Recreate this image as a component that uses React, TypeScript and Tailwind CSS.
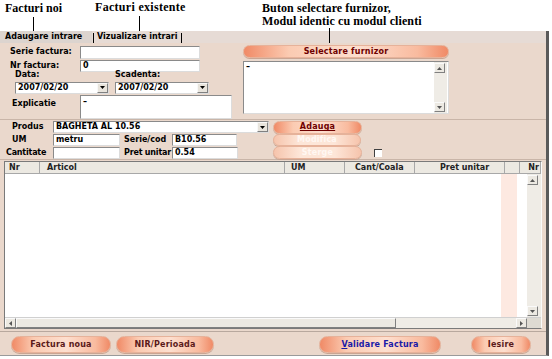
import React from "react";

const ui = "font-['DejaVu_Sans',sans-serif] text-[8px] font-bold";

const Pill = ({
  label,
  w,
  tone = "text-[#6e0000]",
  disabled = false,
  className = "",
}: {
  label: React.ReactNode;
  w: string;
  tone?: string;
  disabled?: boolean;
  className?: string;
}) => (
  <div
    className={`${w} ${className} h-[13px] rounded-full border border-[#e6b29a] flex items-center justify-center shadow-[0_1px_0_#c9a593] ${
      disabled
        ? "bg-[linear-gradient(90deg,#f6c4ac,#fde6d8_30%,#fde6d8_70%,#f6c4ac)]"
        : "bg-[linear-gradient(90deg,#f08a66,#fbcbb2_22%,#fddfcf_55%,#f9bb9f_85%,#f08a66)]"
    }`}
  >
    <span className={`${ui} ${disabled ? "text-[#fff7f2]" : tone} tracking-[0.2px] leading-none`}>{label}</span>
  </div>
);

const Input = ({ w, h = "h-[12px]", value = "" }: { w: string; h?: string; value?: string }) => (
  <div className={`${w} ${h} bg-white border border-[#8a8a8a] border-r-[#dcdcdc] border-b-[#dcdcdc] flex items-center px-[2px] ${ui} text-black`}>
    {value}
  </div>
);

const Combo = ({ w, value }: { w: string; value: string }) => (
  <div className={`${w} h-[12px] bg-white border border-[#8a8a8a] border-r-[#dcdcdc] border-b-[#dcdcdc] flex items-center`}>
    <span className={`${ui} flex-1 pl-[2px] text-black`}>{value}</span>
    <div className="w-[11px] h-[10px] bg-[#e8e4dc] border border-[#f8f8f8] border-r-[#808080] border-b-[#808080] flex items-center justify-center">
      <svg width="5" height="3" viewBox="0 0 5 3"><path d="M0 0h5L2.5 3z" fill="#000" /></svg>
    </div>
  </div>
);

const ScrollBtn = ({ dir }: { dir: "up" | "down" | "left" | "right" }) => {
  const d = {
    up: "M0 3h5L2.5 0z",
    down: "M0 0h5L2.5 3z",
    left: "M3 0v5L0 2.5z",
    right: "M0 0v5L3 2.5z",
  }[dir];
  const vert = dir === "up" || dir === "down";
  return (
    <div className="w-[11px] h-[10px] bg-[#ece9e2] border border-[#fafafa] border-r-[#808080] border-b-[#808080] flex items-center justify-center">
      <svg width={vert ? 5 : 3} height={vert ? 3 : 5} viewBox={vert ? "0 0 5 3" : "0 0 3 5"}>
        <path d={d} fill="#555" />
      </svg>
    </div>
  );
};

export default function App() {
  return (
    <div className="w-[552px] h-[359px] bg-white overflow-hidden flex flex-col">
      {/* annotations */}
      <div className="relative h-[31px] shrink-0 font-['Liberation_Serif',serif] font-bold text-[12px] leading-[13px] text-black">
        <div className="absolute left-[5px] top-[2px]">Facturi noi</div>
        <div className="absolute left-[95px] top-[1px] tracking-[0.3px]">Facturi existente</div>
        <div className="absolute left-[262px] top-[2px] tracking-[0.1px]">
          Buton selectare furnizor,
          <br />
          Modul identic cu modul clienti
        </div>
        <div className="absolute left-[33px] top-[17px] w-px h-[14px] bg-black" />
        <div className="absolute left-[139px] top-[16px] w-px h-[15px] bg-black" />
      </div>

      <div className="relative flex-1 flex flex-col bg-[#ead8cc] border-r-[3px] border-r-[#5a5a5a] mr-[3px] border-b border-b-[#9a9a9a] mb-[3px]">
        <div className="absolute left-[329px] top-[-3px] w-px h-[15px] bg-black" />
        {/* tabs */}
        <div className={`h-[12px] flex items-end bg-[#e6dbd5] ${ui}`}>
          <div className="w-[92px] h-[12px] pl-[5px] bg-[#dcd4cf] flex items-center text-black">Adaugare intrare</div>
          <div className="w-px h-[10px] bg-black ml-[1px]" />
          <div className="pl-[3px] pr-[3px] h-[12px] flex items-center text-black">Vizualizare intrari</div>
          <div className="w-px h-[10px] bg-black" />
        </div>

        {/* header form */}
        <div className="flex pt-[2px] h-[77px] border-b border-b-[#c9b5a8]">
          <div className={`w-[243px] flex flex-col ${ui} text-black`}>
            <div className="flex items-center h-[14px]">
              <span className="w-[80px] pl-[10px]">Serie factura:</span>
              <Input w="w-[120px]" h="h-[13px]" />
            </div>
            <div className="flex items-center h-[13px]">
              <span className="w-[80px] pl-[10px]">Nr factura:</span>
              <Input w="w-[120px]" value="0" />
            </div>
            <div className="flex h-[9px] items-end pl-[15px]">
              <span className="w-[100px] -mt-[3px] self-start">Data:</span>
              <span>Scadenta:</span>
            </div>
            <div className="flex items-center h-[13px] pl-[15px] gap-[6px]">
              <Combo w="w-[94px]" value="2007/02/20" />
              <Combo w="w-[94px]" value="2007/02/20" />
            </div>
            <div className="flex pt-[1px]">
              <span className="w-[80px] pl-[12px] pt-[3px]">Explicatie</span>
              <Input w="w-[152px]" h="h-[24px] !items-start" value="–" />
            </div>
          </div>
          <div className="flex flex-col">
            <Pill label="Selectare furnizor" w="w-[206px]" />
            <div className="mt-[3px] w-[206px] h-[53px] bg-white border border-[#8a8a8a] border-r-[#dcdcdc] border-b-[#dcdcdc] flex">
              <div className={`flex-1 pl-[2px] ${ui} leading-[10px]`}>–</div>
              <div className="w-[13px] bg-[#efece6] flex flex-col justify-between mr-[1px] py-[1px]">
                <ScrollBtn dir="up" />
                <ScrollBtn dir="down" />
              </div>
            </div>
          </div>
        </div>

        {/* product row */}
        <div className={`flex h-[40px] pt-[1px] border-b border-b-[#c9b5a8] ${ui} text-black`}>
          <div className="w-[273px] flex flex-col">
            <div className="flex items-center h-[13px]">
              <span className="w-[53px] pl-[12px]">Produs</span>
              <Combo w="w-[216px]" value="BAGHETA AL 10.56" />
            </div>
            <div className="flex items-center h-[13px]">
              <span className="w-[53px] pl-[12px]">UM</span>
              <Input w="w-[67px]" value="metru" />
              <span className="w-[52px] pl-[4px]">Serie/cod</span>
              <Input w="w-[65px]" value="B10.56" />
            </div>
            <div className="flex items-center h-[13px]">
              <span className="w-[53px] pl-[6px] tracking-[-0.2px]">Cantitate</span>
              <Input w="w-[67px]" />
              <span className="w-[52px] pl-[4px] tracking-[-0.2px]">Pret unitar</span>
              <Input w="w-[66px]" value="0.54" />
            </div>
          </div>
          <div className="flex flex-col">
            <Pill label={<span className="underline">Adauga</span>} w="w-[89px]" />
            <Pill label="Modifica" w="w-[88px]" disabled />
            <div className="flex items-center">
              <Pill label="Sterge" w="w-[89px]" disabled />
              <div className="ml-[12px] w-[8px] h-[8px] border-l border-t border-[#404040] border-r-0 border-b-0 bg-white" />
            </div>
          </div>
        </div>

        {/* table */}
        <div className="mx-[4px] mt-[1px] h-[168px] border border-[#7a7a7a] border-r-[#fafafa] bg-white flex flex-col">
          <div className={`h-[12px] bg-[#ece9e2] flex ${ui} text-[#222]`}>
            {[
              ["w-[35px] pl-[4px]", "Nr"],
              ["w-[245px] pl-[7px]", "Articol"],
              ["w-[60px] pl-[6px]", "UM"],
              ["w-[70px] pl-[10px]", "Cant/Coala"],
              ["w-[90px] pl-[25px]", "Pret unitar"],
              ["w-[15px]", ""],
              ["flex-1 text-right pr-[1px]", "Nr"],
            ].map(([c, t], i) => (
              <div key={i} className={`${c} border-r border-r-[#a8a8a8] border-b border-b-[#a8a8a8] flex items-center ${c.includes("text-right") ? "justify-end" : ""}`}>
                {t}
              </div>
            ))}
          </div>
          <div className="flex-1 flex">
            <div className="w-[497px] h-full" />
            <div className="w-[16px] h-full bg-[#fde9e1]" />
            <div className="w-[10px]" />
            <div className="w-[14px] bg-[#efece6] flex flex-col justify-between py-[1px]">
              <ScrollBtn dir="up" />
              <ScrollBtn dir="down" />
            </div>
          </div>
          <div className="h-[11px] flex bg-[#efece6] border-t border-t-[#d0d0d0]">
            <ScrollBtn dir="left" />
            <div className="w-[380px] h-[10px] bg-[#ece9e2] border border-[#fafafa] border-r-[#808080] border-b-[#808080]" />
            <div className="flex-1" />
            <ScrollBtn dir="right" />
            <div className="w-[14px] bg-[#dedad2]" />
          </div>
        </div>

        {/* bottom buttons */}
        <div className="mt-[2px] border-t border-t-[#b8a89e] flex items-center pt-[4px] pl-[11px]">
          <Pill label="Factura noua" w="w-[100px]" tone="text-[#5a1a1a]" className="!h-[17px]" />
          <Pill label="NIR/Perioada" w="w-[98px]" tone="text-[#5a1a1a]" className="!h-[17px] ml-[5px]" />
          <Pill
            label={
              <span>
                <span className="underline">V</span>alidare Factura
              </span>
            }
            tone="text-[#1a1aa8]"
            w="w-[122px]"
            className="!h-[17px] ml-[105px]"
          />
          <Pill label="Iesire" w="w-[60px]" tone="text-[#5a1a1a]" className="!h-[17px] ml-[30px]" />
        </div>
      </div>
    </div>
  );
}
